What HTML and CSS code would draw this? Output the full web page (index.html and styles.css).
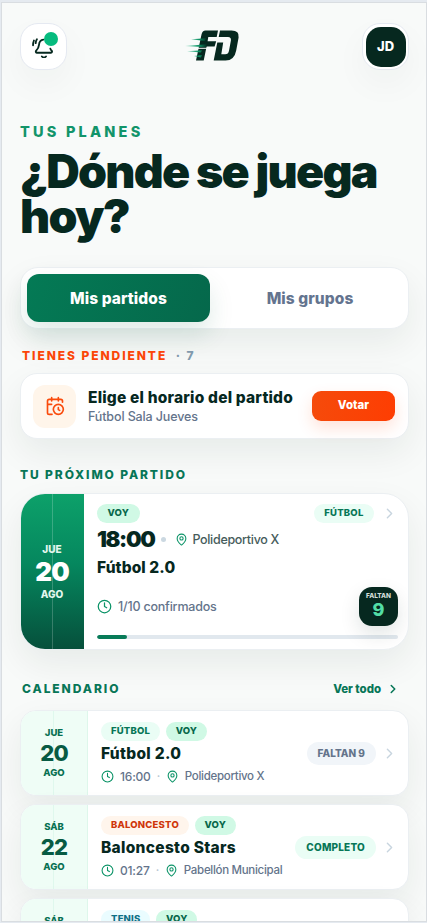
FILE: index.html
```html
<!DOCTYPE html>
<html lang="es">
<head>
<meta charset="utf-8">
<meta name="viewport" content="width=device-width, initial-scale=1">
<title>Tus planes</title>
<link rel="stylesheet" href="styles.css">
</head>
<body>
<svg class="defs" aria-hidden="true">
  <symbol id="chevron" viewBox="0 0 24 24"><path d="m9 18 6-6-6-6"/></symbol>
  <symbol id="clock" viewBox="0 0 24 24"><circle cx="12" cy="12" r="10"/><path d="M12 6v6l3.5 2"/></symbol>
  <symbol id="pin" viewBox="0 0 24 24"><path d="M20 10c0 5-5.5 10.2-7.4 11.8a1 1 0 0 1-1.2 0C9.5 20.2 4 15 4 10a8 8 0 0 1 16 0Z"/><circle cx="12" cy="10" r="3"/></symbol>
</svg>
<div class="shell">
  <header class="topbar">
    <button class="round-btn" aria-label="Avisos">
      <svg class="icon bell" viewBox="0 0 24 24"><path d="M13 3C10 3.300 8.300 5.800 8 9c-.3 3.300-1.600 5-3.200 6.700-.9 1-.3 2.300.9 2.300h16c1.200 0 1.600-1.500.8-2.300-.7-.7-1.200-1.500-1.500-2.300M11.300 22.300c1.200 1.400 3.500 1.400 4.700 0M5.600 2.600C4.700 3.900 4.300 5.300 4.200 7M2.200 4C1.400 5.800 1.200 7.600 1.200 9.500"/></svg>
      <span class="dot"></span>
    </button>
    <svg class="logo" viewBox="0 0 56 32" aria-label="FD">
      <defs>
        <linearGradient id="speed"><stop offset="0" stop-color="#10b47c" stop-opacity=".45"/><stop offset=".65" stop-color="#0c8f62"/><stop offset="1" stop-color="#06281f"/></linearGradient>
      </defs>
      <g fill="#06281f">
        <path d="M20.500 0.500H33L31.700 7H23.300L22.600 11.300H31.200L29.600 16.500H21.600L18.700 30.500H11L14.400 14.500 16.500 4.500Q17.400.5 20.500.5Z"/>
        <path fill-rule="evenodd" d="M35 .5H46.500Q54.600.5 53.600 7.500L51.200 20.500Q49.400 30.500 40.500 30.500H28.700L32.300 12.400H38.200L36.300 24.300H40.200Q43.400 24.300 44 20.800L45.900 10.500Q46.400 7 43 7H33.700Z"/>
      </g>
      <path d="M6 9.300 21 8.300 20 11ZM0 16 22 14.200 21 17.300ZM2 21.300 17 20.300 16 22.600ZM9 26 17 25 16 27.400Z" fill="url(#speed)"/>
      <path d="M10 18.300H23" stroke="#f8faf9" stroke-width="1"/>
    </svg>
    <div class="round-btn"><span class="avatar">JD</span></div>
  </header>

  <main class="content">
    <p class="eyebrow">TUS PLANES</p>
    <h1 class="title">¿Dónde se juega<br>hoy?</h1>

    <nav class="tabs">
      <button class="tab tab-active"><span>Mis partidos</span></button>
      <button class="tab"><span>Mis grupos</span></button>
    </nav>

    <h2 class="label label-pending">TIENES PENDIENTE <span class="count">· 7</span></h2>
    <section class="card pending">
      <span class="pending-icon">
        <svg class="icon" viewBox="0 0 24 24"><path d="M16 14v2.200l1.600 1M16 2v4M21 7.500V6a2 2 0 0 0-2-2H5a2 2 0 0 0-2 2v14a2 2 0 0 0 2 2h3.500M3 10h5M8 2v4"/><circle cx="16" cy="16" r="6"/></svg>
      </span>
      <div class="pending-text">
        <h3>Elige el horario del partido</h3>
        <p>Fútbol Sala Jueves</p>
      </div>
      <button class="vote">Votar</button>
    </section>

    <h2 class="label label-next">TU PRÓXIMO PARTIDO</h2>
    <section class="card next">
      <div class="date date-strong"><span>JUE</span><strong>20</strong><span>AGO</span></div>
      <div class="next-body">
        <div class="next-top"><span class="pill pill-going">VOY</span><span class="pill pill-sport">FÚTBOL</span><svg class="icon chev"><use href="#chevron"/></svg></div>
        <div class="next-when"><strong>18:00</strong><i></i><svg class="icon"><use href="#pin"/></svg><span>Polideportivo X</span></div>
        <h3>Fútbol 2.0</h3>
        <div class="next-people"><svg class="icon"><use href="#clock"/></svg><span class="confirmed">1/10 confirmados</span><span class="missing"><small>FALTAN</small><b>9</b></span></div>
        <div class="bar"><span style="width:10%"></span></div>
      </div>
    </section>

    <div class="cal-head"><h2 class="label">CALENDARIO</h2><a>Ver todo</a><svg class="icon"><use href="#chevron"/></svg></div>
    <div class="list">
      <article class="card row">
        <div class="date date-soft"><span>JUE</span><strong>20</strong><span>AGO</span></div>
        <div class="row-body">
          <div class="pills"><span class="pill pill-sport">FÚTBOL</span><span class="pill pill-going">VOY</span></div>
          <h3>Fútbol 2.0</h3>
          <p class="meta"><svg class="icon"><use href="#clock"/></svg><span class="time">16:00</span><i>·</i><svg class="icon"><use href="#pin"/></svg><span>Polideportivo X</span></p>
        </div>
        <span class="status status-missing">FALTAN 9</span>
        <svg class="icon chev"><use href="#chevron"/></svg>
      </article>
      <article class="card row">
        <div class="date date-soft"><span>SÁB</span><strong>22</strong><span>AGO</span></div>
        <div class="row-body">
          <div class="pills"><span class="pill pill-basket">BALONCESTO</span><span class="pill pill-going">VOY</span></div>
          <h3>Baloncesto Stars</h3>
          <p class="meta"><svg class="icon"><use href="#clock"/></svg><span class="time">01:27</span><i>·</i><svg class="icon"><use href="#pin"/></svg><span>Pabellón Municipal</span></p>
        </div>
        <span class="status status-full">COMPLETO</span>
        <svg class="icon chev"><use href="#chevron"/></svg>
      </article>
      <article class="card row">
        <div class="date date-soft"><span>SÁB</span><strong>22</strong><span>AGO</span></div>
        <div class="row-body">
          <div class="pills"><span class="pill pill-tennis">TENIS</span><span class="pill pill-going">VOY</span></div>
        </div>
      </article>
    </div>
  </main>
</div>
</body>
</html>
```
FILE: styles.css
```css
* { box-sizing: border-box; margin: 0; }
html, body { height: 100%; overflow: hidden; }
body {
  background: #e5eaf0;
  padding: 2px 0 0 1px;
  font-family: Inter, "Open Sans", sans-serif;
  color: #06281f;
}
button { border: 0; font: inherit; padding: 0; }
.defs { position: absolute; width: 0; height: 0; }
.icon {
  fill: none; stroke: currentColor; stroke-width: 2;
  stroke-linecap: round; stroke-linejoin: round; flex: none;
}
.shell {
  width: 426px; height: 920px; overflow: hidden;
  border: 1px solid #d9dde1;
  background: #f8faf9;
}
.topbar {
  height: 83px; padding: 20px 17px 0 18px;
  display: flex; justify-content: space-between; align-items: flex-start;
}
.round-btn {
  position: relative; width: 47px; height: 47px; border-radius: 18px;
  background: #fff; border: 1px solid #e5e9f1; color: #06281f;
  display: flex; align-items: center; justify-content: center;
  box-shadow: 0 14px 34px rgba(6, 40, 31, .04);
}
.bell { width: 21px; height: 21px; margin: 1px 3px 0 0; stroke-width: 2.1; }
.dot {
  position: absolute; right: 8px; top: 8px; width: 14px; height: 14px;
  border-radius: 50%; background: #06bb7e;
}
.logo { width: 56px; height: 32px; margin: 7px 3px 0 0; }
.avatar {
  width: 40px; height: 40px; border-radius: 15px; background: #06281f;
  color: #fff; font-size: 13px; font-weight: 800; line-height: 39px; text-align: center;
}
.content { padding: 0 17px 0 18px; }
.eyebrow {
  padding-top: 36px; font-size: 14.5px; line-height: 20px;
  font-weight: 800; letter-spacing: 3.2px; color: #12946a;
}
.title {
  margin-top: 7px; font-size: 46.500px; line-height: 45px; white-space: nowrap;
  font-weight: 900; letter-spacing: -1.75px;
}
.card, .tabs {
  background: #fff; border: 1px solid #ebeff2;
  box-shadow: 0 14px 34px rgba(6, 40, 31, .07);
}
.tabs {
  margin-top: 28px; height: 62px; padding: 6px; border-radius: 18px;
  display: grid; grid-template-columns: 183px 1fr;
}
.tab {
  height: 48px; border-radius: 12px; background: none; color: #64748f;
  font-size: 15.500px; font-weight: 800; letter-spacing: .08px;
}
.tab:last-child { padding-left: 8px; }
.tab-active {
  background: linear-gradient(110deg, #047a55, #05684b); color: #fff;
  box-shadow: 0 12px 24px rgba(4, 100, 72, .13);
}
.label { font-size: 12px; line-height: 16px; font-weight: 800; letter-spacing: 1.93px; color: #077657; }
.label-pending { margin: 19px 0 0 2px; color: #fb4508; }
.count { color: #8199ad; margin-left: 4px; }
.pending {
  margin-top: 9px; height: 66px; border-radius: 17px; padding: 0 13px 0 12px;
  display: flex; align-items: center;
}
.pending-icon {
  width: 43px; height: 43px; border-radius: 12px; background: #fff5ea; color: #fa4b0c;
  display: flex; align-items: center; justify-content: center;
}
.pending-icon .icon { width: 20px; height: 20px; }
.pending-text { flex: 1; margin-left: 12px; padding-top: 1px; white-space: nowrap; }
.pending h3 { font-size: 15.500px; line-height: 20px; font-weight: 800; letter-spacing: .2px; }
.pending p { font-size: 12.500px; line-height: 18px; color: #64748b; font-weight: 500; letter-spacing: -.12px; }
.vote {
  width: 83px; height: 30px; border-radius: 9px; color: #fff; padding-bottom: 2px;
  background: linear-gradient(100deg, #f54b0b, #fe3d02);
  font-size: 11.500px; font-weight: 800;
  box-shadow: 0 7px 16px rgba(254, 75, 20, .16);
}
.label-next { margin-top: 28px; letter-spacing: 1.88px; }
.next { margin-top: 10px; height: 157px; border-radius: 25px; display: flex; overflow: hidden; }
.date { display: flex; flex-direction: column; align-items: center; justify-content: center; font-size: 10px; line-height: 14px; font-weight: 800; }
.date-strong {
  width: 64px; margin: -1px 0 -1px -1px; color: #e4f7ee;
  background:
    linear-gradient(rgba(255,255,255,.2), rgba(255,255,255,.2)) 32px 0 / 1px 100% no-repeat,
    linear-gradient(#0da16a, #05875e 45%, #064f3b);
}
.date-strong strong { color: #fff; font-size: 26px; line-height: 31px; font-weight: 900; letter-spacing: -1px; }
.next-body { flex: 1; padding: 10px 10px 0 13px; }
.next-top { display: flex; align-items: center; height: 18px; }
.next-top .pill-going { margin-right: auto; padding: 0 10.500px; }
.next-top .pill-sport { padding: 0 10.500px; }
.pill { height: 19px; padding: 0 10px; border-radius: 10px; font-size: 9.500px; line-height: 18px; font-weight: 800; letter-spacing: .2px; }
.pill-going { background: #d0f9e5; color: #07674a; }
.pill-sport { background: #eafdf5; color: #077657; }
.pill-basket { background: #fff5ec; color: #cf360a; }
.pill-tennis { background: #eafcff; color: #0d7086; }
.chev { width: 17px; height: 17px; color: #c8d5df; }
.next-top .chev { margin-left: 7px; }
.next-when { display: flex; align-items: center; height: 34px; }
.next-when strong { font-size: 22px; font-weight: 900; letter-spacing: -1.4px; }
.next-when i { width: 5px; height: 5px; border-radius: 50%; background: #cbd8e1; margin: 0 9px 0 7px; }
.next-when .icon { width: 13px; height: 13px; color: #0b9367; }
.next-when span { margin-left: 4px; font-size: 12.500px; font-weight: 500; color: #465c5b; letter-spacing: -.3px; }
.next-body h3 { font-size: 15.500px; line-height: 20px; font-weight: 800; letter-spacing: .1px; margin-top: 2px; }
.next-people { display: flex; align-items: center; height: 40px; margin-top: 8px; }
.next-people .icon { width: 15px; height: 15px; color: #0b9367; }
.confirmed { font-size: 12.500px; font-weight: 500; color: #64748b; margin: 0 auto 0 6px; letter-spacing: -.2px; }
.missing {
  width: 39px; height: 39px; border-radius: 13px; background: #06281f;
  display: flex; flex-direction: column; align-items: center; padding-top: 5px;
  box-shadow: 0 8px 20px rgba(6, 40, 31, .12);
}
.missing small { font-size: 6.500px; line-height: 8px; font-weight: 800; color: #d1ddd8; }
.missing b { font-size: 18px; line-height: 20px; color: #52dda5; font-weight: 800; }
.bar { height: 4px; border-radius: 2px; background: #e1e8ee; margin-top: 9px; overflow: hidden; }
.bar span { display: block; height: 100%; border-radius: 2px; background: #087b58; }
.cal-head { margin: 30px 9px 0 2px; height: 18px; display: flex; align-items: center; color: #077657; }
.cal-head .label { margin-right: auto; }
.cal-head a { font-size: 11.500px; font-weight: 800; letter-spacing: -.05px; }
.cal-head .icon { width: 14px; height: 14px; margin-left: 5px; stroke-width: 2.6; }
.list { margin-top: 12px; display: grid; gap: 8px; }
.row { height: 86px; border-radius: 16px; display: flex; align-items: center; overflow: hidden; padding-right: 10px; }
.date-soft {
  width: 67px; align-self: stretch; border-right: 1px solid #def7eb; color: #087052; font-size: 9.500px;
  background: linear-gradient(#dff8ed, #dff8ed) 32px 0 / 1px 100% no-repeat, #effdf6;
}
.date-soft strong { font-size: 22px; line-height: 26px; font-weight: 850; color: #075b43; letter-spacing: -.8px; }
.row-body { flex: 1; align-self: stretch; margin-left: 13px; padding-top: 11px; white-space: nowrap; }
.pills { display: flex; gap: 6px; }
.pills .pill-going { padding: 0 9.500px; }
.row h3 { font-size: 15.500px; line-height: 20px; font-weight: 800; letter-spacing: .3px; margin-top: 3px; }
.meta { display: flex; align-items: center; height: 18px; margin-top: 3px; font-size: 11.500px; font-weight: 500; color: #64748b; letter-spacing: -.3px; }
.meta .icon { width: 13px; height: 13px; color: #0b9367; }
.meta span { margin-left: 6px; }
.meta .time { font-size: 12px; letter-spacing: -.2px; }
.meta i { margin: 0 6px; color: #b8c6d2; font-style: normal; }
.status { height: 23px; padding: 0 11px; border-radius: 12px; font-size: 10px; line-height: 22px; font-weight: 800; white-space: nowrap; }
.status-missing { background: #f1f5f9; color: #64748b; }
.status-full { background: #eafdf5; color: #077657; letter-spacing: .2px; }
.row .chev { margin-left: 5px; }
```
